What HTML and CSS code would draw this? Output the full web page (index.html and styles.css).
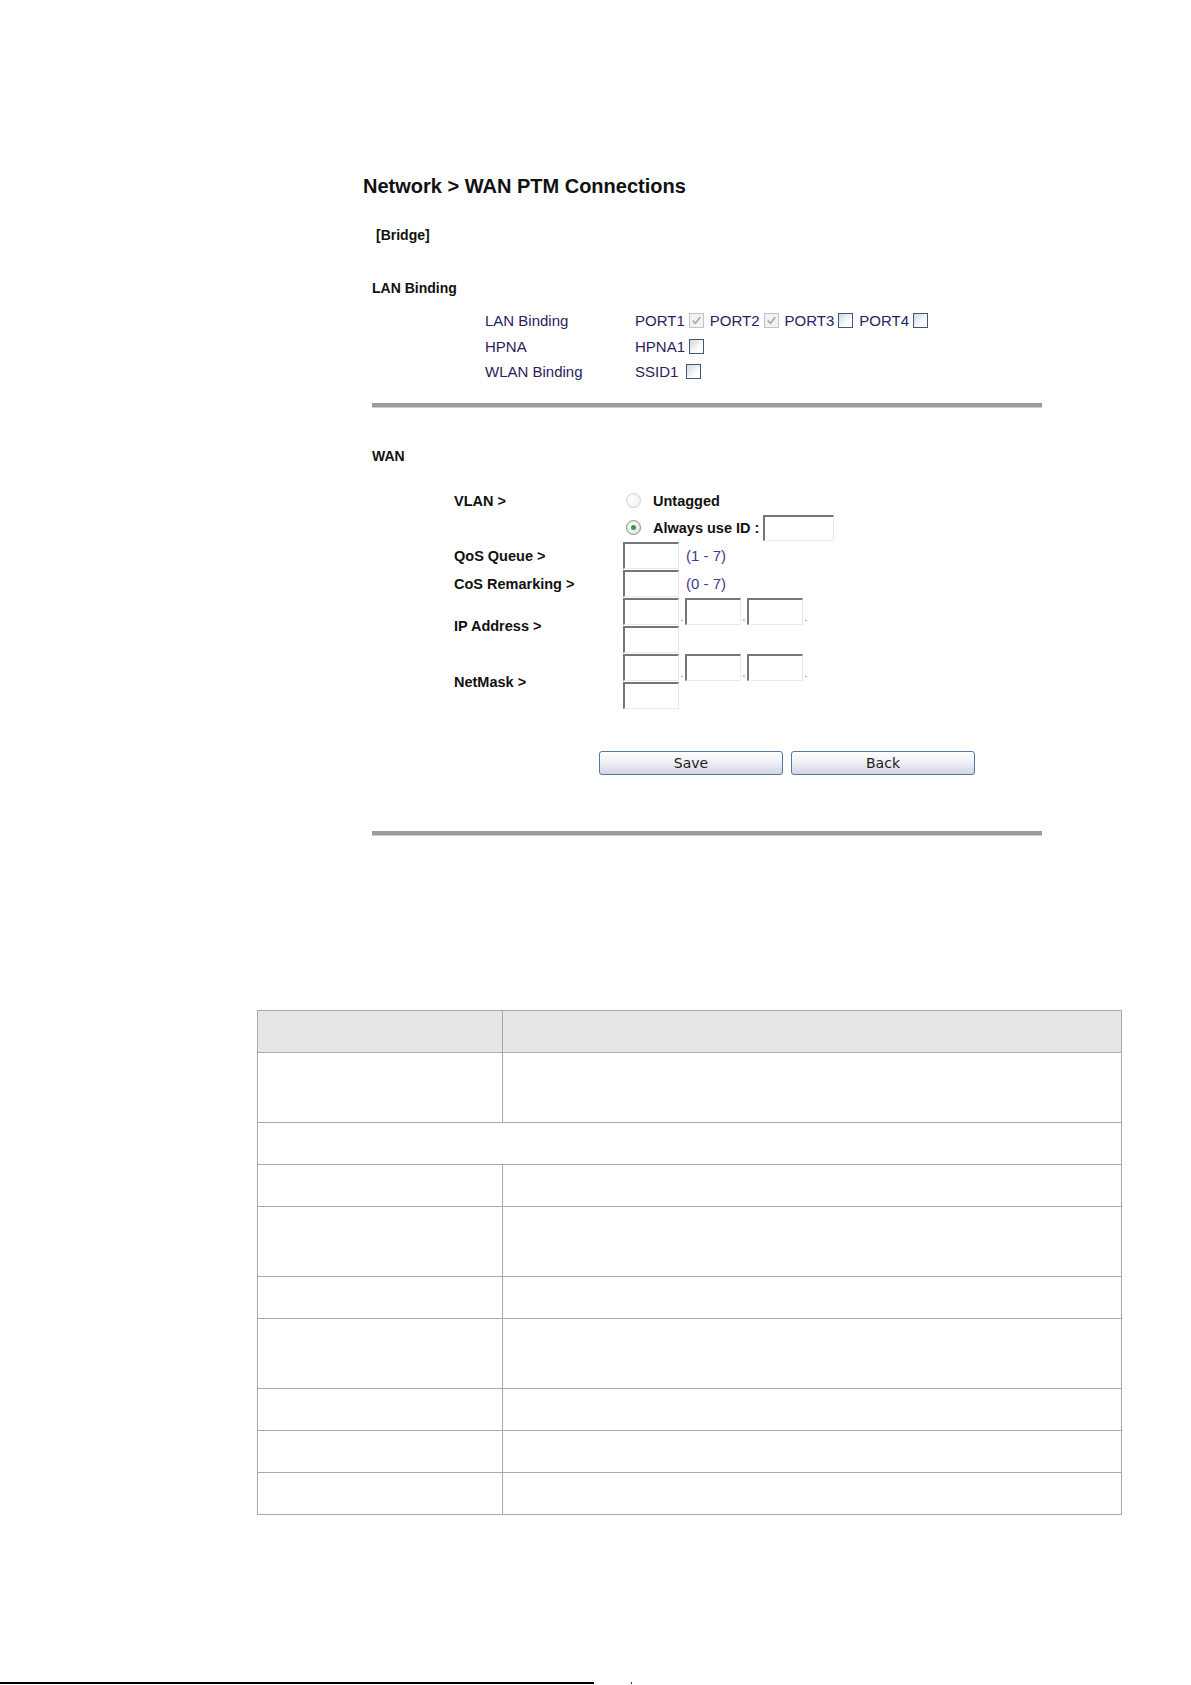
FILE: index.html
```html
<!DOCTYPE html>
<html>
<head>
<meta charset="utf-8">
<title>Network &gt; WAN PTM Connections</title>
<link rel="stylesheet" href="styles.css">
</head>
<body>
<div class="page">
  <div class="ui">
    <h1 class="title">Network &gt; WAN PTM Connections</h1>
    <div class="mode">[Bridge]</div>
    <div class="sec-title">LAN Binding</div>
    <div class="bind">
      <div class="bind-label">LAN Binding</div>
      <div class="bind-val">
        <span>PORT1</span><span class="cb cb-dis"><svg viewBox="0 0 15 15" width="15" height="15"><path d="M3.8 7.6 L6.4 10.2 L11.2 4.2" fill="none" stroke="#a8a8a8" stroke-width="1.6"/></svg></span>
        <span>PORT2</span><span class="cb cb-dis"><svg viewBox="0 0 15 15" width="15" height="15"><path d="M3.8 7.6 L6.4 10.2 L11.2 4.2" fill="none" stroke="#a8a8a8" stroke-width="1.6"/></svg></span>
        <span>PORT3</span><span class="cb"></span>
        <span>PORT4</span><span class="cb"></span>
      </div>
      <div class="bind-label">HPNA</div>
      <div class="bind-val"><span>HPNA1</span><span class="cb"></span></div>
      <div class="bind-label">WLAN Binding</div>
      <div class="bind-val"><span>SSID1</span><span class="cb cb-gap"></span></div>
    </div>
    <div class="rule"></div>
    <div class="sec-title wan-title">WAN</div>
    <div class="wan">
      <div class="wan-label top">VLAN &gt;</div>
      <div class="wan-val">
        <div class="line first"><span class="radio"></span><span class="opt">Untagged</span></div>
        <div class="line"><span class="radio on"></span><span class="opt">Always use ID :</span><input class="box wide" type="text"></div>
      </div>
      <div class="wan-label">QoS Queue &gt;</div>
      <div class="wan-val">
        <div class="line"><input class="box" type="text"><span class="hint">(1 - 7)</span></div>
      </div>
      <div class="wan-label">CoS Remarking &gt;</div>
      <div class="wan-val">
        <div class="line"><input class="box" type="text"><span class="hint">(0 - 7)</span></div>
      </div>
      <div class="wan-label">IP Address &gt;</div>
      <div class="wan-val">
        <div class="line"><input class="box" type="text"><span class="dot">.</span><input class="box" type="text"><span class="dot">.</span><input class="box" type="text"><span class="dot">.</span></div>
        <div class="line"><input class="box" type="text"></div>
      </div>
      <div class="wan-label">NetMask &gt;</div>
      <div class="wan-val">
        <div class="line"><input class="box" type="text"><span class="dot">.</span><input class="box" type="text"><span class="dot">.</span><input class="box" type="text"><span class="dot">.</span></div>
        <div class="line"><input class="box" type="text"></div>
      </div>
    </div>
    <div class="buttons">
      <button class="btn" type="button">Save</button>
      <button class="btn" type="button">Back</button>
    </div>
    <div class="rule rule2"></div>
  </div>

  <table class="desc">
    <tr class="head"><td class="c1">&nbsp;</td><td>&nbsp;</td></tr>
    <tr class="tall"><td class="c1">&nbsp;</td><td>&nbsp;</td></tr>
    <tr><td colspan="2">&nbsp;</td></tr>
    <tr><td class="c1">&nbsp;</td><td>&nbsp;</td></tr>
    <tr class="tall"><td class="c1">&nbsp;</td><td>&nbsp;</td></tr>
    <tr><td class="c1">&nbsp;</td><td>&nbsp;</td></tr>
    <tr class="tall"><td class="c1">&nbsp;</td><td>&nbsp;</td></tr>
    <tr><td class="c1">&nbsp;</td><td>&nbsp;</td></tr>
    <tr><td class="c1">&nbsp;</td><td>&nbsp;</td></tr>
    <tr><td class="c1">&nbsp;</td><td>&nbsp;</td></tr>
  </table>

  <div class="foot"><span class="foot-line"></span><span class="foot-tick"></span></div>
</div>
</body>
</html>
```

FILE: styles.css
```css
* { box-sizing: border-box; }

html, body {
  margin: 0;
  padding: 0;
  background: #ffffff;
}

body {
  font-family: "Liberation Sans", Arial, sans-serif;
  color: #111111;
}

.page {
  width: 1191px;
  height: 1685px;
  padding-top: 174px;
  display: flex;
  flex-direction: column;
  overflow: hidden;
}

.ui {
  margin-left: 372px;
  width: 670px;
}

.title {
  margin: 0 0 0 -9px;
  font-size: 20px;
  line-height: 24px;
  font-weight: bold;
  color: #111111;
}

.mode {
  margin: 28px 0 0 4px;
  font-size: 14px;
  line-height: 18px;
  font-weight: bold;
}

.sec-title {
  margin-top: 35px;
  font-size: 14px;
  line-height: 18px;
  font-weight: bold;
}

.bind {
  margin-top: 11px;
  padding-left: 113px;
  display: grid;
  grid-template-columns: 150px auto;
  grid-auto-rows: 25.5px;
  align-items: center;
  font-size: 15px;
  color: #2c2160;
}

.bind-val {
  display: flex;
  align-items: center;
}

.cb {
  display: inline-block;
  width: 15px;
  height: 15px;
  border: 1px solid #3d5a7c;
  background: linear-gradient(135deg, #d6d6d6, #ffffff 70%);
  margin-left: 4px;
  margin-right: 6px;
  position: relative;
}

.cb-gap { margin-left: 8px; }

.cb-dis {
  border-color: #c4c4c4;
  background: #f2f2f2;
}

.cb-dis svg {
  position: absolute;
  left: -1px;
  top: -1px;
}

.rule {
  margin-top: 18px;
  height: 5px;
  background: #9c9c9c;
  border-bottom: 1px solid #cfcfcf;
}

.wan-title { margin-top: 39px; }

.wan {
  margin-top: 23px;
  padding-left: 82px;
  display: grid;
  grid-template-columns: 169px auto;
}

.wan-label {
  align-self: center;
  font-size: 14.5px;
  font-weight: bold;
  line-height: 28px;
}

.wan-label.top {
  align-self: start;
  line-height: 26px;
}

.line {
  height: 28px;
  display: flex;
  align-items: center;
}

.line.first { height: 26px; }

.radio {
  display: inline-block;
  width: 15px;
  height: 15px;
  border-radius: 50%;
  border: 1px solid #d0d0d0;
  background: radial-gradient(circle at 40% 40%, #ffffff, #ededed);
  margin-left: 3px;
  margin-right: 12px;
  position: relative;
}

.radio.on {
  border-color: #8a8a8a;
  background: radial-gradient(circle at 40% 40%, #ffffff, #dadada);
}

.radio.on::after {
  content: "";
  position: absolute;
  left: 4px;
  top: 4px;
  width: 5px;
  height: 5px;
  border-radius: 50%;
  background: #2f9a3c;
}

.opt {
  font-size: 14.5px;
  font-weight: bold;
}

.box {
  width: 56px;
  height: 27px;
  margin: 0;
  padding: 0;
  border-top: 2px solid #767676;
  border-left: 2px solid #767676;
  border-right: 1px solid #ecebdc;
  border-bottom: 1px solid #ecebdc;
  background: #ffffff;
  font-size: 13px;
}

.box.wide {
  width: 71px;
  height: 26px;
  margin-left: 4px;
}

.hint {
  margin-left: 7px;
  font-size: 15px;
  color: #45388a;
}

.dot {
  width: 6px;
  align-self: flex-end;
  text-align: center;
  font-size: 10px;
  line-height: 10px;
  padding-bottom: 3px;
  color: #8a3aa8;
}

.buttons {
  margin-top: 41px;
  padding-left: 227px;
  display: flex;
  gap: 8px;
}

.btn {
  width: 184px;
  height: 24px;
  margin: 0;
  padding: 0;
  border: 1px solid #56789c;
  border-radius: 3px;
  background: linear-gradient(#ffffff, #eeeef6 50%, #d4d4e4);
  font-family: "DejaVu Sans", Verdana, sans-serif;
  font-size: 14px;
  color: #222222;
}

.rule2 { margin-top: 56px; }

.desc {
  margin-top: 174px;
  margin-left: 257px;
  width: 865px;
  border-collapse: collapse;
  table-layout: fixed;
}

.desc td {
  border: 1px solid #a9a9a9;
  height: 42px;
  padding: 0;
  font-size: 14px;
}

.desc td.c1 { width: 245px; }

.desc tr.head td { background: #e6e6e6; }

.desc tr.tall td { height: 70px; }

.foot {
  margin-top: auto;
  height: 3px;
  padding-bottom: 1px;
  display: flex;
  align-items: flex-end;
}

.foot-line {
  display: block;
  width: 594px;
  height: 2px;
  background: #000000;
}

.foot-tick {
  display: block;
  width: 1px;
  height: 2px;
  margin-left: 37px;
  background: #333333;
}
```
